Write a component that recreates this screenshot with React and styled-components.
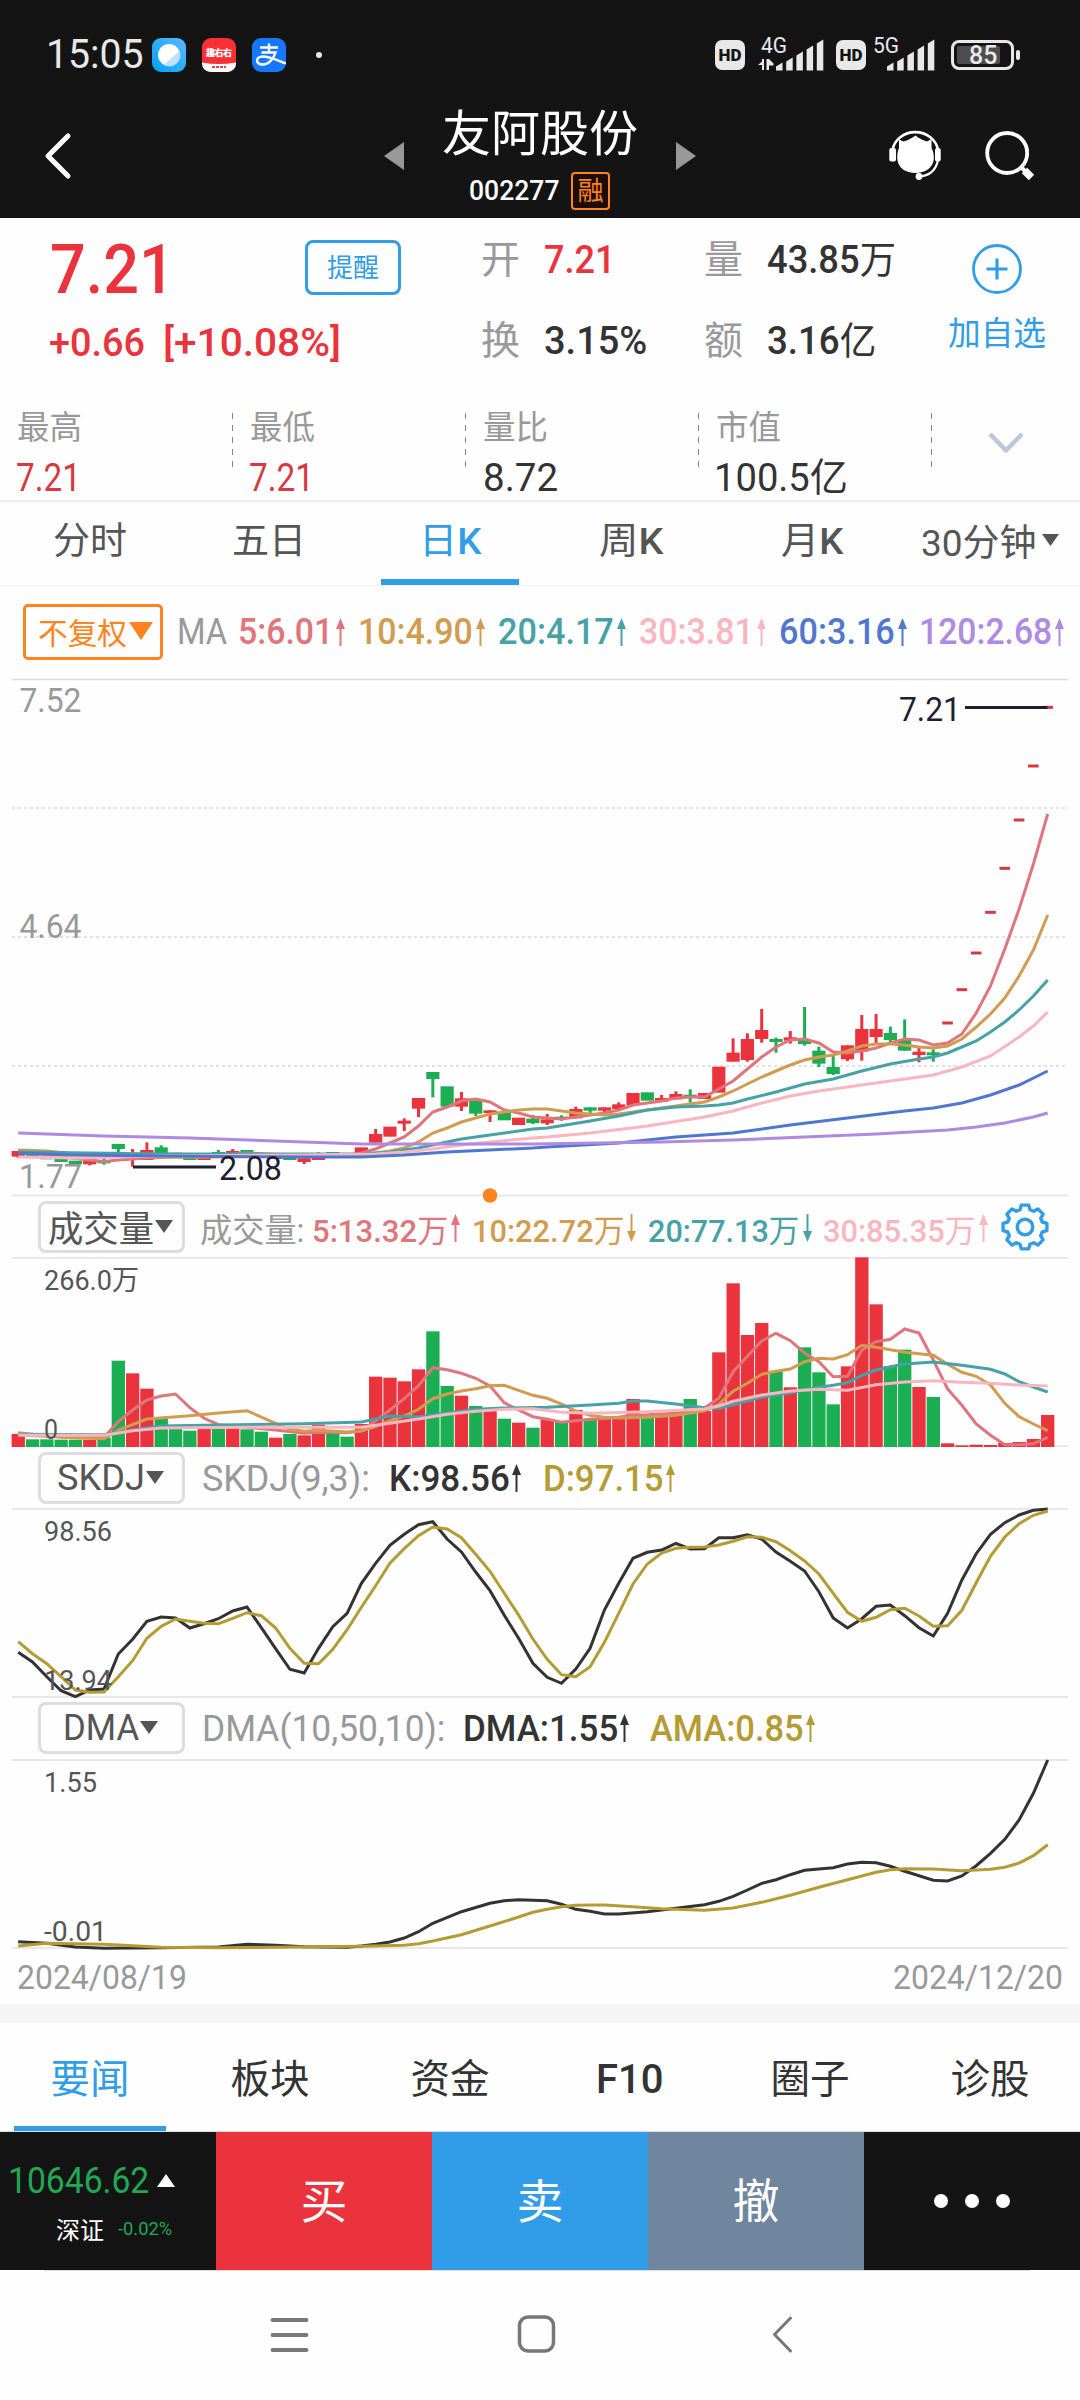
import React, { useLayoutEffect, useRef, useState } from "react";
import styled, { createGlobalStyle } from "styled-components";

const colors = {
  dark: "#141414",
  red: "#ea333c",
  softRed: "#d63a40",
  green: "#1bae52",
  blue: "#319de8",
  slate: "#70869e",
  orange: "#ff8420",
  text: "#333333",
  tab: "#555555",
  muted: "#999999",
  line: "#e8e8e8",
  ma5: "#e0757b",
  ma10: "#d29c50",
  ma20: "#47a2a8",
  ma30: "#f9b6c0",
  ma60: "#5077cf",
  ma120: "#b08ae0",
  gold: "#b49c33",
  note: "#1f1f33",
};

const fontStack = `Roboto, "Noto Sans CJK SC", sans-serif`;

const GlobalStyle = createGlobalStyle`
  * {
    box-sizing: border-box;
  }
  body {
    margin: 0;
    background: #fefefe;
    font-family: ${fontStack};
  }
  svg {
    display: block;
    flex: none;
  }
`;

const Page = styled.div`
  width: 1080px;
  height: 2400px;
  overflow: hidden;
  display: flex;
  flex-direction: column;
  background: #fefefe;
`;

/* ---------- condensed text ---------- */

const FitBox = styled.span`
  display: block;
  flex: none;
  width: ${(p) => p.$w}px;
  margin-left: ${(p) => p.$ml || 0}px;
  font-size: ${(p) => p.$size}px;
  font-weight: ${(p) => p.$weight || 400};
  color: ${(p) => p.$color || "inherit"};
  white-space: pre;
`;

const FitInner = styled.span`
  display: inline-block;
  transform-origin: left center;
`;

// Chinese characters keep the regular weight inside medium figures
const Cn = styled.span`
  font-weight: 400;
`;

// squeezes one line of text to the width it is given
function Fit({ w, size, ml, color, weight, children }) {
  const ref = useRef(null);
  const [scale, setScale] = useState(1);
  useLayoutEffect(() => {
    setScale(w / ref.current.offsetWidth);
  }, [w, size, children]);
  return (
    <FitBox $w={w} $size={size} $ml={ml} $color={color} $weight={weight}>
      <FitInner ref={ref} style={{ transform: `scaleX(${scale})` }}>
        {children}
      </FitInner>
    </FitBox>
  );
}

/* ---------- status bar ---------- */

const StatusBar = styled.div`
  height: 102px;
  flex: none;
  padding: 7px 58px 0 46px;
  display: flex;
  align-items: center;
  background: ${colors.dark};
  color: #e8e8e8;
`;

const AppIcons = styled.div`
  display: flex;
  gap: 16px;
  margin-left: 8px;
`;

const StatusDot = styled.span`
  width: 6px;
  height: 6px;
  border-radius: 50%;
  background: #e8e8e8;
  margin-left: 30px;
`;

const StatusRight = styled.div`
  display: flex;
  align-items: center;
  margin-left: auto;
`;

const HdBadge = styled.span`
  width: 30px;
  height: 30px;
  border-radius: 7px;
  background: #e8e8e8;
  color: ${colors.dark};
  font-size: 17px;
  font-weight: 900;
  line-height: 30px;
  display: flex;
  justify-content: center;
`;

const Battery = styled.div`
  position: relative;
  width: 63px;
  height: 30px;
  margin-left: 14px;
  border: 3px solid #e8e8e8;
  border-radius: 8px;
  padding: 3px;
  font-size: 24px;
  font-weight: 500;
  line-height: 19px;
  &::after {
    content: "";
    position: absolute;
    right: -9px;
    top: 7px;
    width: 4px;
    height: 10px;
    border-radius: 2px;
    background: #e8e8e8;
  }
`;

const BatteryFill = styled.div`
  width: 43px;
  height: 18px;
  border-radius: 2px;
  background: #4d4d4d;
`;

function Signal({ label, arrows }) {
  const bars = [8, 13, 19, 25, 31];
  return (
    <svg width="68" height="52" viewBox="0 -8 68 52" fill="#e8e8e8">
      <text x={arrows ? 3 : 4} y="15.500" fontSize="22" fontWeight="400" textLength="26" lengthAdjust="spacingAndGlyphs">
        {label}
      </text>
      {arrows && <path d="M0 28L4 24.500V22H6V33H4V28zM8.500 22H11L15.500 26.500V28.500H11V33H8.500z" />}
      {bars.map((h, i) => (
        <path key={h} d={`M${18 + i * 10.2} 33.500v-${h - 4}l6.500-4v${h}z`} />
      ))}
    </svg>
  );
}

/* ---------- title bar ---------- */

const TitleBar = styled.header`
  height: 116px;
  flex: none;
  padding: 6px 44px 14px 43px;
  display: flex;
  align-items: center;
  background: ${colors.dark};
  color: #ffffff;
`;

const TitleBlock = styled.div`
  width: 196px;
  margin: 0 38px;
  padding-top: 6px;
  display: flex;
  flex-direction: column;
  gap: 15px;
`;

const StockName = styled.div`
  display: flex;
  height: 48px;
  line-height: 51px;
`;

const CodeRow = styled.div`
  display: flex;
  align-items: center;
  height: 38px;
  padding-left: 27px;
`;

const MarginTag = styled.span`
  width: 39px;
  height: 38px;
  margin-left: 12px;
  border: 2px solid ${colors.orange};
  border-radius: 4px;
  background: #1c0d02;
  color: ${colors.orange};
  font-size: 26px;
  line-height: 35px;
  text-align: center;
`;

const Spacer = styled.div`
  width: ${(p) => p.$w}px;
  flex: none;
`;

/* ---------- quote ---------- */

const Quote = styled.section`
  height: 174px;
  flex: none;
  padding-top: 2px;
  display: grid;
  grid-template-columns: 481px 222px 227px 150px;
`;

const PriceRow = styled.div`
  display: flex;
  align-items: center;
  height: 98px;
  padding-left: 50px;
  color: ${colors.red};
`;

const ChangeRow = styled.div`
  display: flex;
  height: 49px;
  line-height: 51px;
  padding-left: 49px;
  color: ${colors.red};
`;

const RemindButton = styled.button`
  width: 96px;
  height: 55px;
  margin: 0 0 3px 130px;
  padding: 0 0 5px;
  border: 3px solid ${colors.blue};
  border-radius: 8px;
  background: transparent;
  color: ${colors.blue};
  font-family: inherit;
  font-size: 26px;
`;

const Pair = styled.div`
  display: flex;
  height: 81px;
  line-height: 81px;
`;

const AddWatch = styled.div`
  display: flex;
  flex-direction: column;
  align-items: center;
  padding: 24px 16px 0 0;
  gap: 20px;
  line-height: 40px;
`;

const Stats = styled.section`
  height: 110px;
  flex: none;
  display: flex;
  border-bottom: 2px solid #ededed;
`;

const StatCell = styled.div`
  width: 232px;
  padding: 16px 0 0 17px;
  line-height: 40px;
  & > span + span {
    margin-top: 10px;
  }
`;

const StatDivider = styled.span`
  width: 1px;
  height: 54px;
  margin-top: 21px;
  background: repeating-linear-gradient(#7d8790 0 6px, transparent 6px 12px);
`;

const MoreArrow = styled.div`
  margin: 40px 0 0 56px;
`;

/* ---------- tabs ---------- */

const PeriodTabs = styled.nav`
  height: 84px;
  flex: none;
  display: grid;
  grid-template-columns: repeat(6, 180px);
  border-bottom: 1px solid #f0f0f0;
`;

const PeriodTab = styled.div`
  display: flex;
  justify-content: center;
  align-items: center;
  padding-bottom: ${(p) => (p.$menu ? 7 : 11)}px;
  height: 83px;
  color: ${(p) => (p.$active ? colors.blue : colors.tab)};
  background: ${(p) =>
    p.$active ? `linear-gradient(${colors.blue}, ${colors.blue}) center bottom / 138px 6px no-repeat` : "none"};
`;

/* ---------- legends ---------- */

const MaRow = styled.div`
  height: 92px;
  flex: none;
  display: flex;
  align-items: center;
  padding-left: 23px;
`;

const AdjustButton = styled.div`
  width: 140px;
  height: 56px;
  display: flex;
  align-items: center;
  padding: 0 0 3px 12px;
  border: 3px solid ${colors.orange};
  border-radius: 5px;
  color: ${colors.orange};
`;

const IndicatorRow = styled.div`
  height: 60px;
  flex: none;
  display: flex;
  align-items: center;
  padding-left: 38px;
`;

const IndicatorButton = styled.div`
  width: 147px;
  height: 52px;
  flex: none;
  display: flex;
  align-items: center;
  justify-content: center;
  gap: 1px;
  padding: 0 2px 2px 0;
  border: 3px solid #dddddd;
  border-radius: 8px;
  color: ${colors.tab};
`;

const LegendGroup = styled.div`
  display: flex;
  align-items: center;
  padding-top: 1px;
`;

const DateRow = styled.div`
  height: 55px;
  flex: none;
  display: flex;
  align-items: center;
  justify-content: space-between;
  padding: 0 17px;
  color: ${colors.muted};
`;

const ArrowSvg = styled.svg`
  margin-left: ${(p) => p.$ml}px;
  transform: ${(p) => (p.$down ? "rotate(180deg)" : "none")};
`;

function Arrow({ color, ml = 3, down }) {
  return (
    <ArrowSvg $ml={ml} $down={down} width="9" height="28" viewBox="0 0 9 28" fill={color}>
      <path d="M4.500 0L9 11H5.500V28H3.500V11H0z" />
    </ArrowSvg>
  );
}

function Caret({ color = colors.tab, w = 18, h = 13 }) {
  return (
    <svg width={w} height={h} viewBox="0 0 18 13" preserveAspectRatio="none" fill={color}>
      <path d="M0 0H18L9 13z" />
    </svg>
  );
}

function GearIcon() {
  const pts = [];
  for (let t = 0; t < 8; t++) {
    [[-16, 18], [-9.500, 22.200], [9.500, 22.200], [16, 18]].forEach(([deg, r]) => {
      const a = ((t * 45 - 90 + deg) * Math.PI) / 180;
      pts.push(`${(24 + r * Math.cos(a)).toFixed(1)},${(24 + r * Math.sin(a)).toFixed(1)}`);
    });
  }
  return (
    <svg width="48" height="48" viewBox="0 0 48 48" fill="none" stroke={colors.blue} strokeWidth="3.400" strokeLinejoin="round">
      <polygon points={pts.join(" ")} />
      <circle cx="24" cy="24" r="7.800" />
    </svg>
  );
}

/* ---------- chart data ---------- */

const STEP = 14.298;
const xAt = (i) => 18.200 + STEP * i;

// index, colour, body top, body bottom, wick top, wick bottom (thirds of a pixel)
const candles = [
  [0, "r", 1413, 1430, 1413, 1433], [1, "g", 1420, 1428], [2, "g", 1428, 1438], [3, "g", 1435, 1446],
  [4, "g", 1442, 1453], [5, "r", 1440, 1453, 1440, 1456], [6, "g", 1445, 1450, 1425, 1454],
  [7, "g", 1392, 1407, 1392, 1416], [8, "r", 1435, 1440, 1407, 1460], [9, "r", 1410, 1440, 1387, 1440],
  [10, "g", 1402, 1420, 1396, 1420], [11, "g", 1418, 1430], [12, "g", 1430, 1440], [13, "r", 1419, 1440],
  [14, "g", 1416, 1424, 1410, 1424], [15, "r", 1413, 1424, 1407, 1424], [16, "g", 1410, 1419],
  [17, "g", 1420, 1430], [18, "r", 1425, 1437], [19, "g", 1430, 1440], [20, "r", 1435, 1446, 1435, 1452],
  [21, "r", 1420, 1440, 1417, 1440], [22, "g", 1416, 1424], [23, "g", 1420, 1426], [24, "r", 1402, 1422],
  [25, "r", 1362, 1388, 1347, 1388], [26, "r", 1340, 1370], [27, "r", 1322, 1331, 1315, 1353],
  [28, "r", 1254, 1286, 1254, 1311], [29, "g", 1176, 1197, 1176, 1252], [30, "g", 1219, 1280],
  [31, "r", 1255, 1280, 1236, 1293], [32, "g", 1262, 1301, 1262, 1308], [33, "r", 1291, 1299, 1291, 1326],
  [34, "g", 1298, 1321], [35, "r", 1313, 1335], [36, "g", 1316, 1329, 1305, 1332],
  [37, "r", 1318, 1330, 1302, 1335], [38, "g", 1310, 1315, 1306, 1322], [39, "r", 1287, 1315, 1280, 1315],
  [40, "g", 1282, 1292, 1282, 1299], [41, "r", 1282, 1292, 1282, 1297], [42, "r", 1273, 1287, 1267, 1287],
  [43, "r", 1239, 1275], [44, "g", 1237, 1262], [45, "r", 1254, 1265, 1245, 1265], [46, "r", 1242, 1258, 1234, 1258],
  [47, "g", 1244, 1251, 1228, 1268], [48, "r", 1239, 1257], [49, "r", 1160, 1238], [50, "r", 1118, 1145, 1075, 1145],
  [51, "r", 1077, 1140, 1060, 1145], [52, "r", 1050, 1077, 987, 1088], [53, "g", 1077, 1086, 1073, 1118],
  [54, "r", 1072, 1082, 1053, 1091], [55, "g", 1080, 1092, 981, 1097], [56, "g", 1112, 1151, 1100, 1161],
  [57, "g", 1161, 1182, 1125, 1185], [58, "r", 1096, 1138, 1096, 1143], [59, "r", 1047, 1115, 1005, 1142],
  [60, "r", 1047, 1071, 1002, 1090], [61, "g", 1059, 1080, 1040, 1088], [62, "g", 1080, 1112, 1018, 1112],
  [63, "r", 1115, 1125, 1104, 1147], [64, "g", 1117, 1126, 1108, 1145],
];

// one-price limit-up days
const limitDays = [[65, 1029], [66, 929], [67, 819], [68, 697], [69, 565], [70, 420], [71, 258], [72, 82]];

const priceLines = [
  [colors.ma5, "0:1151 1:1153 3:1157 5:1160 6:1161.500 7:1160 9:1158 11:1157 13:1157 16:1153 20:1156 23:1155 24:1153 25:1149 26:1143 27:1137 28:1126 29:1112 30:1107 31:1101 32:1099 33:1102 34:1110 35:1113 36:1117 37:1118 38:1119 39:1117 40:1115 41:1113 42:1110 43:1105 44:1103 45:1101 46:1098 47:1097 48:1097 49:1089 50:1081 51:1069 52:1057 53:1047 54:1040 55:1039 56:1043 57:1052 58:1053 59:1051 60:1048 61:1043 62:1039 63:1040 64:1045 65:1043 66:1034 67:1013 68:986 69:949 70:909 71:864 72:814"],
  [colors.ma10, "0:1150 2:1151 4:1154 6:1155 10:1157 14:1157 20:1156 24:1155 25:1153 26:1151 27:1148 28:1142 29:1133 30:1128 31:1122 32:1118 33:1114 34:1112 35:1110 36:1109 37:1109 38:1111 39:1113 41:1115 42:1114 43:1112 44:1110 46:1106 47:1104 48:1102 49:1097 50:1091 51:1084 52:1077 53:1071 54:1065 55:1060 56:1057 57:1055 58:1051 59:1046 60:1044 61:1044 62:1045 63:1047 64:1048 65:1046 66:1039 67:1027 68:1014 69:998 70:976 71:950 72:915"],
  [colors.ma20, "0:1152 10:1154 20:1154 24:1154 26:1152 28:1148 29:1145 31:1139 33:1135 35:1131 36:1129 37:1128 40:1121 42:1116 44:1110 46:1107 48:1106 49:1105 50:1103 51:1099 53:1092 55:1084 57:1079 59:1071 61:1064 63:1059 64:1057 65:1053 66:1047 67:1041 68:1032 69:1022 70:1010 71:996 72:980"],
  [colors.ma30, "0:1157 4:1158 10:1156 20:1155 25:1154 27:1152 29:1149 31:1145 33:1142 36:1138 37:1137 40:1133 44:1126 48:1117 50:1111 52:1103 54:1096 56:1091 58:1087 60:1083 62:1079 64:1075 66:1067 68:1056 70:1037 71:1026 72:1012"],
  [colors.ma60, "0:1153 4:1155 10:1156 20:1157 24:1157 27:1155 30:1152 36:1148 37:1147 42:1143 46:1137 50:1133 54:1125 58:1118 62:1111 64:1108 66:1103 68:1095 70:1085 72:1071"],
  [colors.ma120, "0:1133 6:1136 12:1138 18:1141 24:1144 28:1144 36:1144 45:1142 50:1140 55:1137 60:1134 65:1130 67:1127 69:1123 71:1117 72:1113"],
];

const volumes =
  "r762 g778 g778 g779 g779 r779 g773 g542 r580 r626 g713 g746 g752 r746 g745 r745 g748 g755 r773 g762 r766 r734 g760 g770 r732 r590 r593 r604 r568 g454 g618 r647 g678 r690 g716 r728 g743 r717 g725 r690 g718 r716 r708 r657 g705 r707 r695 g657 r693 r517 r310 r465 r429 g572 r622 g502 g577 g673 r559 r232 r373 g558 g509 r621 g651 r790 r796 r794 r795 r789 r786 r777 r705".split(" ");

const volumeLines = [
  [colors.ma5, "0:765 3:770 5:772 6:772 7:725 8:690 9:660 10:648 11:642 12:683 13:715 14:734 15:738 16:742 18:750 20:760 21:757 23:758 24:752 25:722 26:690 27:656 28:617 29:563 30:569 31:580 32:595 33:618 34:668 35:690 36:710 37:718 38:727 39:722 40:718 41:716 42:712 43:705 44:704 45:702 46:699 47:690 48:684 49:655 50:575 51:529 52:483 53:460 54:482 55:519 56:545 57:590 58:589 59:510 60:485 61:478 62:447 63:459 64:540 65:627 66:676 67:732 68:766 69:794 70:794 71:791 72:772"],
  [colors.ma10, "0:758 3:772 6:776 7:750 9:717 12:707 14:699 16:692 18:730 19:748 20:754 21:751 23:756 24:753 25:740 26:722 27:708 28:688 29:656 30:642 31:633 32:626 33:617 34:616 35:631 36:646 37:655 38:672 39:693 40:706 41:712 42:714 44:712 46:706 48:692 49:673 50:634 51:610 52:583 53:574 54:567 55:545 56:535 57:537 58:524 59:496 60:502 62:517 64:526 65:553 66:577 67:589 68:615 69:670 70:710 71:732 72:752"],
  [colors.ma20, "0:763 6:764 8:750 10:738 14:735 20:731 24:726 26:708 28:711 30:700 32:688 34:684 37:682 40:675 42:670 43:663 44:663 46:672 48:683 49:685 50:674 52:651 54:638 56:622 57:616 58:608 59:586 60:570 61:560 62:552 64:546 66:556 68:568 69:582 70:605 71:621 72:636"],
  [colors.ma30, "0:766 6:766 8:752 10:744 16:742 24:742 26:730 28:717 30:703 32:694 34:688 36:686 38:697 40:700 44:695 48:687 49:678 50:664 52:645 54:633 56:628 58:631 60:614 62:606 64:602 66:607 68:610 70:615 72:618"],
];

const skdjLines = [
  [colors.text, "0:457 1:486 2:530 3:572 4:590 5:570 6:567 7:462 8:418 9:364 10:351 11:354 12:384 13:371 14:356 15:333 16:321 17:383 18:446 19:508 20:519 21:445 22:380 23:340 24:250 25:190 26:136 27:103 28:74 29:65 30:117 31:156 32:216 33:272 34:346 35:415 36:490 37:532 38:550 39:507 40:445 41:330 42:250 43:175 44:157 45:150 46:130 47:147 48:146 49:113 50:113 51:104 52:117 53:156 54:184 55:213 56:275 57:354 58:384 59:356 60:319 61:315 62:347 63:383 64:408 65:340 66:240 67:161 68:103 69:68 70:45 71:31 72:27"],
  [colors.gold, "0:425 1:461 2:491 3:530 4:570 5:577 6:576 7:530 8:482 9:415 10:379 11:357 12:364 13:370 14:371 15:355 16:338 17:347 18:384 19:445 20:490 21:491 22:448 23:389 24:322 25:257 26:190 27:146 28:107 29:81 30:87 31:113 32:163 33:214 34:280 35:345 36:417 37:478 38:524 39:530 40:500 41:427 42:340 43:252 44:192 45:159 46:145 47:142 48:141 49:135 50:124 51:110 52:112 53:125 54:152 55:183 56:222 57:280 58:337 59:364 60:352 61:329 62:325 63:348 64:379 65:377 66:331 67:248 68:169 69:111 70:71 71:46 72:33"],
];

const dmaLines = [
  [colors.text, "0:1325 2:1330 4:1341 6:1345 10:1343 14:1341 16:1333 18:1336 20:1340 23:1342 24:1338 25:1333 26:1326 27:1314 28:1295 29:1270 31:1235 33:1210 34:1202 35:1199 36:1201 37:1202 38:1213 39:1228 40:1234 41:1242 42:1242 44:1235 46:1225 48:1214 49:1204 50:1189 51:1170 52:1150 53:1139 54:1124 55:1111 57:1103 58:1092 59:1087 60:1088 61:1099 62:1114 64:1141 65:1143 66:1128 67:1097 68:1060 69:1018 70:960 71:880 72:780"],
  [colors.gold, "0:1338 2:1330 6:1333 10:1342 14:1343 18:1342 24:1339 27:1336 28:1331 29:1323 31:1304 33:1278 35:1251 36:1237 37:1228 38:1220 39:1216 40:1215 41:1215 43:1220 45:1226 48:1231 50:1224 52:1207 54:1186 56:1162 58:1139 60:1117 61:1109 62:1106 64:1107 66:1112 68:1108 69:1102 70:1089 71:1067 72:1034"],
];

/* ---------- charts ---------- */

const ChartSvg = styled.svg`
  overflow: visible;
  font-family: ${fontStack};
`;

function Lines({ data, unit = 3 }) {
  return data.map(([color, src]) => (
    <polyline
      key={color}
      fill="none"
      stroke={color}
      strokeWidth="3"
      points={src
        .split(" ")
        .map((s) => s.split(":").map(Number))
        .map(([i, v]) => `${xAt(i).toFixed(1)},${(v / unit).toFixed(1)}`)
        .join(" ")}
    />
  ));
}

function Rule({ y, color = colors.line, dash, w = 2 }) {
  return <line x1="12" x2="1068" y1={y} y2={y} stroke={color} strokeWidth={w} strokeDasharray={dash} />;
}

function Label({ x, y, w, size = 28, color = colors.tab, children }) {
  return (
    <text x={x} y={y + size * 0.355} fontSize={size} fill={color} textLength={w} lengthAdjust="spacingAndGlyphs">
      {children}
    </text>
  );
}

const fillOf = (c) => (c === "r" ? colors.red : colors.green);

function PriceChart() {
  return (
    <ChartSvg width="1080" height="519" viewBox="0 678 1080 519">
      <Rule y={679.5} color="#dedede" w={1.500} />
      {[808, 937, 1066].map((y) => (
        <Rule key={y} y={y} color="#d5dadd" dash="3 3" w={1.500} />
      ))}
      <Rule y={1195.5} />
      <Label x={19.500} y={700} w={62} size={34} color={colors.muted}>7.52</Label>
      <Label x={19.500} y={925.500} w={62} size={34} color={colors.muted}>4.64</Label>
      {candles.map(([i, c, top, bottom, hi, lo]) => (
        <g key={i} fill={fillOf(c)}>
          <rect x={xAt(i) - 6.600} y={680 + top / 3} width="13.200" height={(bottom - top) / 3} />
          {hi && <rect x={xAt(i) - 1.500} y={680 + hi / 3} width="3" height={(lo - hi) / 3} />}
        </g>
      ))}
      {limitDays.map(([i, v]) => (
        <rect key={i} x={xAt(i) - 5.300} y={678.500 + v / 3} width="10.600" height="3" fill={colors.softRed} />
      ))}
      <Lines data={priceLines} unit={1} />
      <Label x={19} y={1176} w={63} size={34} color={colors.muted}>1.77</Label>
      <path d="M133 1167H216M965 707.500H1047.500" stroke={colors.note} strokeWidth="3" />
      <Label x={219} y={1168} w={63} size={34} color={colors.note}>2.08</Label>
      <Label x={899} y={708.500} w={62} size={34} color={colors.note}>7.21</Label>
      <circle cx="490" cy="1195.500" r="7.300" fill={colors.orange} />
    </ChartSvg>
  );
}

function VolumeChart() {
  return (
    <ChartSvg width="1080" height="191" viewBox="0 77 1080 191">
      <Rule y={78} />
      <Rule y={266} />
      {volumes.map((v, i) => {
        const top = Number(v.slice(1)) / 3;
        return <rect key={i} x={xAt(i) - 6.600} y={top} width="13.300" height={267 - top} fill={fillOf(v[0])} />;
      })}
      <Lines data={volumeLines} />
      <Label x={44} y={100.500} w={95}>266.0万</Label>
      <Label x={44} y={249.500} w={14}>0</Label>
    </ChartSvg>
  );
}

function SkdjChart() {
  return (
    <ChartSvg width="1080" height="190" viewBox="0 8 1080 190">
      <Rule y={9} />
      <Rule y={197} />
      <Lines data={skdjLines} />
      <Label x={44} y={31} w={68}>98.56</Label>
      <Label x={44} y={180} w={68}>13.94</Label>
    </ChartSvg>
  );
}

function DmaChart() {
  return (
    <ChartSvg width="1080" height="191" viewBox="0 258 1080 191">
      <Rule y={260} />
      <Rule y={448} />
      <Lines data={dmaLines} />
      <Label x={44} y={282} w={53}>1.55</Label>
      <Label x={44} y={431} w={63}>-0.01</Label>
    </ChartSvg>
  );
}

/* ---------- bottom ---------- */

const Band = styled.div`
  height: 19px;
  flex: none;
  background: #f5f5f5;
`;

const NewsTabs = styled.nav`
  height: 109px;
  flex: none;
  display: grid;
  grid-template-columns: repeat(6, 180px);
  border-bottom: 1px solid #dddddd;
`;

const NewsTab = styled.div`
  font-size: 39.500px;
  line-height: 113px;
  height: 108px;
  display: flex;
  justify-content: center;
  color: ${(p) => (p.$active ? colors.blue : colors.text)};
  background: ${(p) =>
    p.$active ? `linear-gradient(${colors.blue}, ${colors.blue}) center bottom / 152px 5px no-repeat` : "none"};
`;

const ActionBar = styled.div`
  height: 138px;
  flex: none;
  display: grid;
  grid-template-columns: repeat(5, 216px);
  color: #ffffff;
`;

const Action = styled.div`
  display: flex;
  align-items: center;
  justify-content: center;
  gap: 17px;
  padding-bottom: ${(p) => p.$lift || 0}px;
  background: ${(p) => p.$bg};
  font-size: 47px;
`;

const IndexBox = styled.div`
  background: ${colors.dark};
  padding: 27px 0 0 8px;
`;

const IndexLine = styled.div`
  display: flex;
  align-items: center;
  height: 42px;
  & + & {
    margin-top: 6px;
    padding-left: 48px;
  }
`;

const Dot = styled.span`
  width: 14px;
  height: 14px;
  border-radius: 50%;
  background: #ffffff;
`;

const SystemNav = styled.div`
  height: 130px;
  flex: none;
  padding: 0 0 2px 269px;
  display: flex;
  align-items: center;
  background: linear-gradient(#dddddd, #dddddd) 44px 0 / 986px 1px no-repeat;
`;

function Legend({ w, size = 36, ml, color, down, gap = 3, children }) {
  return (
    <>
      <Fit w={w} size={size} ml={ml} color={color} weight={500}>
        {children}
      </Fit>
      <Arrow color={color} ml={gap} down={down} />
    </>
  );
}

export default function App() {
  return (
    <Page>
      <GlobalStyle />
      <StatusBar>
        <Fit w={98} size={40}>15:05</Fit>
        <AppIcons>
          <svg width="34" height="34" viewBox="0 0 34 34">
            <defs>
              <linearGradient id="browser" x1="0" y1="1" x2="1" y2="0">
                <stop offset="0" stopColor="#00a2ff" />
                <stop offset="1" stopColor="#5cb8fb" />
              </linearGradient>
            </defs>
            <rect width="34" height="34" rx="9" fill="url(#browser)" />
            <circle cx="17" cy="17" r="11" fill="#ffffff" />
            <path d="M27.500 13A11 11 0 0 1 12 26.800z" fill="#bfe0fb" />
          </svg>
          <svg width="34" height="34" viewBox="0 0 34 34">
            <rect width="34" height="34" rx="9" fill="#fb2f36" />
            <path d="M0 24.500q17 3 34 0v1a8.500 8.500 0 0 1-8.500 8.500h-17A8.500 8.500 0 0 1 0 25.500z" fill="#ffffff" />
            <text x="4" y="18" fontSize="9" fontWeight="900" fill="#ffffff" textLength="26">趣右右</text>
            <path d="M10 29h14" stroke="#e8434a" strokeWidth="2" strokeDasharray="3 1" />
          </svg>
          <svg width="34" height="34" viewBox="0 0 34 34">
            <rect width="34" height="34" rx="9" fill="#1677ff" />
            <g stroke="#ffffff" strokeWidth="2.400" fill="none">
              <path d="M8 9.500H26M17 5.500V14.500M9.500 14.500H23.500C22 20 17 26.500 10.500 26.500C3 26.500 3.500 18.500 10.500 18.500C18 18.500 26 22.500 34 25.500" />
            </g>
          </svg>
        </AppIcons>
        <StatusDot />
        <StatusRight>
          <HdBadge>HD</HdBadge>
          <Spacer $w={13} />
          <Signal label="4G" arrows />
          <Spacer $w={10} />
          <HdBadge>HD</HdBadge>
          <Spacer $w={3} />
          <Signal label="5G" />
          <Battery>
            <BatteryFill>
              <Fit w={28} size={25} ml={12} weight={500}>85</Fit>
            </BatteryFill>
          </Battery>
          <Spacer $w={8} />
        </StatusRight>
      </StatusBar>

      <TitleBar>
        <svg width="30" height="48" viewBox="0 0 30 48" fill="none" stroke="#ffffff" strokeWidth="5" strokeLinecap="round" strokeLinejoin="round">
          <path d="M25 4L5 24L25 44" />
        </svg>
        <Spacer $w={311} />
        <svg width="20" height="28" viewBox="0 0 20 28" fill="#999999">
          <path d="M0 14L20 0V28z" />
        </svg>
        <TitleBlock>
          <StockName>
            <Fit w={196} size={49}>友阿股份</Fit>
          </StockName>
          <CodeRow>
            <Fit w={90} size={28} weight={500}>002277</Fit>
            <MarginTag>融</MarginTag>
          </CodeRow>
        </TitleBlock>
        <svg width="20" height="28" viewBox="0 0 20 28" fill="#999999">
          <path d="M20 14L0 0V28z" />
        </svg>
        <Spacer $w={193} />
        <svg width="52" height="52" viewBox="0 0 52 52" fill="#ffffff">
          <path d="M3.500 20A23 21 0 0 1 49 20" fill="none" stroke="#ffffff" strokeWidth="2.600" />
          <path d="M49 30Q46 45 31 46.500" fill="none" stroke="#ffffff" strokeWidth="2.200" />
          <rect x="0.300" y="18" width="6.700" height="13.500" rx="2" />
          <rect x="46" y="18" width="5.700" height="13.500" rx="2" />
          <path d="M10 9.500L14.500 11.500Q20 10 23.500 7.500L26.500 5.500L29 7.500Q33 10 38 11.500L42.500 9V18Q45 22 44.800 29C44 38 36 43 26.500 43S9 38 8.300 29Q8 22 10 18z" />
          <circle cx="30" cy="46.500" r="3.400" />
        </svg>
        <Spacer $w={43} />
        <svg width="52" height="52" viewBox="0 0 52 52" fill="none" stroke="#ffffff">
          <circle cx="23.200" cy="23" r="20" strokeWidth="3.800" />
          <path d="M37 37L41 41" strokeWidth="4" />
          <path d="M40.500 40.500L47.500 47.500" strokeWidth="7.500" />
        </svg>
      </TitleBar>

      <Quote>
        <div>
          <PriceRow>
            <Fit w={125} size={69} weight={500}>7.21</Fit>
            <RemindButton>提醒</RemindButton>
          </PriceRow>
          <ChangeRow>
            <Fit w={96} size={39} weight={500}>+0.66</Fit>
            <Fit w={178} size={39} ml={18} weight={500}>[+10.08%]</Fit>
          </ChangeRow>
        </div>
        <div>
          <Pair>
            <Fit w={39} size={39} color={colors.muted}>开</Fit>
            <Fit w={71} size={38} ml={24} color={colors.red} weight={500}>7.21</Fit>
          </Pair>
          <Pair>
            <Fit w={39} size={39} color={colors.muted}>换</Fit>
            <Fit w={103} size={38} ml={24} color={colors.text} weight={500}>3.15%</Fit>
          </Pair>
        </div>
        <div>
          <Pair>
            <Fit w={39} size={39} ml={1} color={colors.muted}>量</Fit>
            <Fit w={129} size={38} ml={24} color={colors.text} weight={500}>43.85<Cn>万</Cn></Fit>
          </Pair>
          <Pair>
            <Fit w={39} size={39} ml={1} color={colors.muted}>额</Fit>
            <Fit w={109} size={38} ml={24} color={colors.text} weight={500}>3.16<Cn>亿</Cn></Fit>
          </Pair>
        </div>
        <AddWatch>
          <svg width="50" height="50" viewBox="0 0 50 50" fill="none" stroke={colors.blue} strokeWidth="2.800">
            <circle cx="25" cy="25" r="23.500" />
            <path d="M14.500 25H35.500M25 14.500V35.500" strokeWidth="3.200" />
          </svg>
          <Fit w={98} size={33} color={colors.blue}>加自选</Fit>
        </AddWatch>
      </Quote>

      <Stats>
        <StatCell>
          <Fit w={65} size={33} color={colors.muted}>最高</Fit>
          <Fit w={65} size={39} ml={-1} color={colors.softRed}>7.21</Fit>
        </StatCell>
        <StatDivider />
        <StatCell>
          <Fit w={65} size={33} color={colors.muted}>最低</Fit>
          <Fit w={65} size={39} ml={-1} color={colors.softRed}>7.21</Fit>
        </StatCell>
        <StatDivider />
        <StatCell>
          <Fit w={65} size={33} color={colors.muted}>量比</Fit>
          <Fit w={75} size={39} color={colors.text}>8.72</Fit>
        </StatCell>
        <StatDivider />
        <StatCell>
          <Fit w={65} size={33} color={colors.muted}>市值</Fit>
          <Fit w={134} size={39} ml={-2} color={colors.text}>100.5亿</Fit>
        </StatCell>
        <StatDivider />
        <MoreArrow>
          <svg width="36" height="22" viewBox="0 0 36 22" fill="none" stroke="#b9c9d8" strokeWidth="4.500" strokeLinejoin="round">
            <path d="M2 2L18 18.500L34 2" />
          </svg>
        </MoreArrow>
      </Stats>

      <PeriodTabs>
        <PeriodTab><Fit w={74} size={37}>分时</Fit></PeriodTab>
        <PeriodTab><Fit w={74} size={37} ml={-2}>五日</Fit></PeriodTab>
        <PeriodTab $active><Fit w={62} size={37} weight={500}><Cn>日</Cn>K</Fit></PeriodTab>
        <PeriodTab><Fit w={64} size={37} ml={2} weight={500}><Cn>周</Cn>K</Fit></PeriodTab>
        <PeriodTab><Fit w={62} size={37} ml={3} weight={500}><Cn>月</Cn>K</Fit></PeriodTab>
        <PeriodTab $menu>
          <Fit w={116} size={37}>30分钟</Fit>
          <Spacer $w={5} />
          <Caret w={17} h={12} />
        </PeriodTab>
      </PeriodTabs>

      <MaRow>
        <AdjustButton>
          <Fit w={89} size={30}>不复权</Fit>
          <Spacer $w={2} />
          <Caret color={colors.orange} w={24} h={18} />
        </AdjustButton>
        <Fit w={50} size={36} ml={14} color={colors.muted}>MA</Fit>
        <Legend w={95} ml={11} gap={3} color={colors.ma5}>5:6.01</Legend>
        <Legend w={115} ml={13} gap={3} color={colors.ma10}>10:4.90</Legend>
        <Legend w={116} ml={13} gap={3} color={colors.ma20}>20:4.17</Legend>
        <Legend w={115} ml={13} gap={3} color={colors.ma30}>30:3.81</Legend>
        <Legend w={116} ml={13} gap={3} color={colors.ma60}>60:3.16</Legend>
        <Legend w={133} ml={12} gap={3} color={colors.ma120}>120:2.68</Legend>
      </MaRow>

      <PriceChart />

      <IndicatorRow>
        <IndicatorButton>
          <Fit w={106} size={36}>成交量</Fit>
          <Caret />
        </IndicatorButton>
        <LegendGroup>
          <Fit w={104} size={32.500} ml={15} color={colors.muted}>成交量:</Fit>
          <Legend w={136} size={32} ml={8} gap={3} color={colors.ma5}>5:13.32<Cn>万</Cn></Legend>
          <Legend w={152} size={32} ml={12} gap={3} down color={colors.ma10}>10:22.72<Cn>万</Cn></Legend>
          <Legend w={151} size={32} ml={12} gap={4} down color={colors.ma20}>20:77.13<Cn>万</Cn></Legend>
          <Legend w={152} size={32} ml={11} gap={4} color={colors.ma30}>30:85.35<Cn>万</Cn></Legend>
        </LegendGroup>
        <Spacer $w={13} />
        <GearIcon />
      </IndicatorRow>
      <VolumeChart />

      <IndicatorRow>
        <IndicatorButton>
          <Fit w={88} size={37}>SKDJ</Fit>
          <Caret />
        </IndicatorButton>
        <Fit w={168} size={36.500} ml={17} color={colors.muted}>SKDJ(9,3):</Fit>
        <Legend w={121} size={36.500} ml={19} gap={2} color={colors.text}>K:98.56</Legend>
        <Legend w={121} size={36.500} ml={22} gap={2} color={colors.gold}>D:97.15</Legend>
      </IndicatorRow>
      <SkdjChart />

      <IndicatorRow>
        <IndicatorButton>
          <Fit w={76} size={37}>DMA</Fit>
          <Caret />
        </IndicatorButton>
        <Fit w={243} size={36.500} ml={17} color={colors.muted}>DMA(10,50,10):</Fit>
        <Legend w={155} size={36.500} ml={18} gap={2} color={colors.text}>DMA:1.55</Legend>
        <Legend w={154} size={36.500} ml={21} gap={2} color={colors.gold}>AMA:0.85</Legend>
      </IndicatorRow>
      <DmaChart />

      <DateRow>
        <Fit w={170} size={34}>2024/08/19</Fit>
        <Fit w={170} size={34}>2024/12/20</Fit>
      </DateRow>
      <Band />

      <NewsTabs>
        <NewsTab $active>要闻</NewsTab>
        <NewsTab>板块</NewsTab>
        <NewsTab>资金</NewsTab>
        <NewsTab>
          <Fit w={68} size={40} weight={500}>F10</Fit>
        </NewsTab>
        <NewsTab>圈子</NewsTab>
        <NewsTab>诊股</NewsTab>
      </NewsTabs>

      <ActionBar>
        <IndexBox>
          <IndexLine>
            <Fit w={141} size={37} color="#22a854">10646.62</Fit>
            <Spacer $w={8} />
            <svg width="18" height="13" viewBox="0 0 18 13" fill="#ffffff">
              <path d="M9 0L18 13H0z" />
            </svg>
          </IndexLine>
          <IndexLine>
            <Fit w={48} size={24}>深证</Fit>
            <Fit w={54} size={19} ml={14} color="#22a854">-0.02%</Fit>
          </IndexLine>
        </IndexBox>
        <Action $bg={colors.red} $lift={7}>买</Action>
        <Action $bg={colors.blue} $lift={7}>卖</Action>
        <Action $bg={colors.slate} $lift={7}>撤</Action>
        <Action $bg={colors.dark}>
          <Dot />
          <Dot />
          <Dot />
        </Action>
      </ActionBar>

      <SystemNav>
        <svg width="40" height="40" viewBox="0 0 40 40" stroke="#777777" strokeWidth="3.800" strokeLinecap="round">
          <path d="M3.500 6H37.500M3.500 21H37.500M3.500 36H37.500" />
        </svg>
        <Spacer $w={207} />
        <svg width="40" height="40" viewBox="0 0 40 40" fill="none" stroke="#777777" strokeWidth="3.500">
          <rect x="3.500" y="3" width="34" height="34" rx="8.500" />
        </svg>
        <Spacer $w={215} />
        <svg width="24" height="40" viewBox="0 0 24 40" fill="none" stroke="#777777" strokeWidth="3" strokeLinecap="round" strokeLinejoin="round">
          <path d="M19.500 4L3.500 20.500L19.500 37" />
        </svg>
      </SystemNav>
    </Page>
  );
}
